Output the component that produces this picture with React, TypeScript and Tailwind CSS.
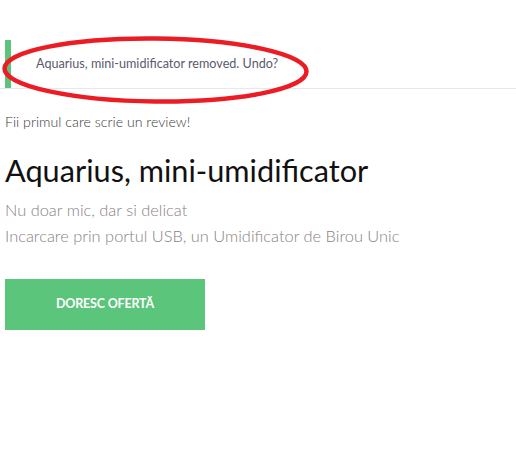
import React from "react";

export default function App() {
  return (
    <div className="relative w-[516px] h-[461px] bg-white font-['Lato',sans-serif] overflow-hidden">
      {/* notice bar */}
      <div className="pt-[40px]">
        <div className="flex items-center h-[49px] border-b border-[#e8e8e8]">
          <div className="w-[6px] h-[48px] ml-[5px] self-start bg-[#5bc57b]" />
          <p className="ml-[25px] text-[12.6px] text-[#5a5a6e]">
            Aquarius, mini-umidificator removed. Undo?
          </p>
        </div>
      </div>

      <div className="px-[5px]">
        <p className="mt-[24px] text-[14.2px] leading-[18px] text-[#3a3a3a] font-light">
          Fii primul care scrie un review!
        </p>
        <h1 className="mt-[22px] text-[30.7px] leading-[36px] text-[#111] font-normal">
          Aquarius, mini-umidificator
        </h1>
        <div className="mt-[8px] text-[16.4px] leading-[26px] text-[#8a8284] font-light">
          <p>Nu doar mic, dar si delicat</p>
          <p>Incarcare prin portul USB, un Umidificator de Birou Unic</p>
        </div>
        <button className="mt-[30px] w-[200px] h-[51px] bg-[#5bc57b] text-white text-[12.5px] font-bold tracking-[-0.2px]">
          DORESC OFERTĂ
        </button>
      </div>

      {/* red annotation */}
      <svg className="absolute left-0 top-0 pointer-events-none" width="516" height="461">
        <ellipse cx="155.5" cy="70" rx="151" ry="31.5" fill="none" stroke="#ec1c24" strokeWidth="4.5" transform="rotate(0.6 155.5 70)" />
      </svg>
    </div>
  );
}
